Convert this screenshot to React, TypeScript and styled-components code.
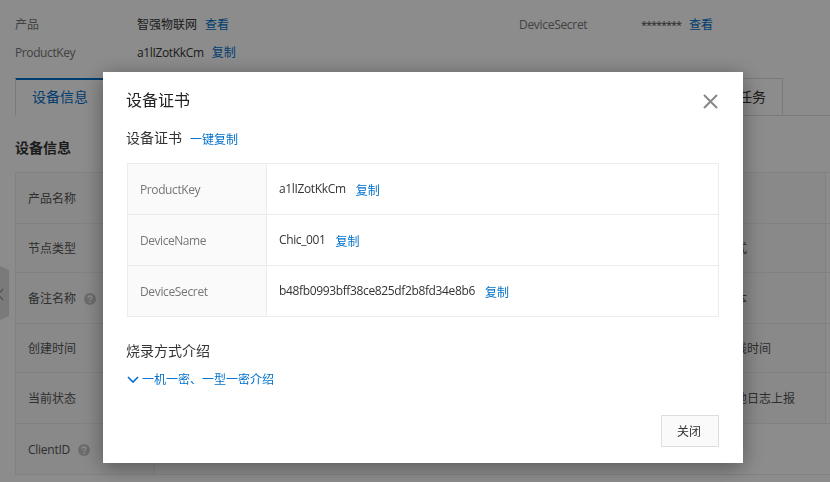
import React from 'react';
import styled, { createGlobalStyle } from 'styled-components';

const GlobalStyle = createGlobalStyle`
  * { box-sizing: border-box; }
  html, body, #root { margin: 0; height: 482px; overflow: hidden; }
  body {
    background: #fff;
    color: #333;
    font: 12px/18px "Open Sans", "Noto Sans CJK SC", sans-serif;
    white-space: nowrap;
  }
`;

const Page = styled.main`
  width: 1010px;
  height: 482px;
  padding: 16px 0 0 15px;
  overflow: hidden;
`;

const Summary = styled.section`
  display: grid;
  grid-template-columns: 122px 382px 122px 1fr;
  grid-auto-rows: 28px;
`;

const Muted = styled.span<{ $track?: number }>`
  color: #777;
  letter-spacing: ${p => p.$track ?? 0}px;
`;

const Value = styled.span<{ $track?: number; $lift?: number }>`
  letter-spacing: ${p => p.$track ?? 0}px;
  margin-top: ${p => -(p.$lift ?? 0)}px;
`;

const Secret = styled(Value)`
  width: 40px;
  font-size: 11px;
  color: #444;
`;

const Inline = styled.div`
  display: flex;
  align-items: flex-start;
  gap: 8px;
`;

const Link = styled.a<{ $drop?: number }>`
  color: #0070cc;
  cursor: pointer;
  margin-top: ${p => p.$drop ?? 0}px;
`;

const Tabs = styled.nav`
  display: flex;
  height: 38px;
  margin-top: 6px;
  font-size: 14px;
  line-height: 36px;
`;

const Tab = styled.div<{ $active?: boolean; $width: number }>`
  width: ${p => p.$width}px;
  padding: 0 16px;
  text-align: right;
  border: 1px solid #dedede;
  border-left-width: ${p => (p.$active ? 1 : 0)}px;
  ${p => p.$active && 'color: #0070cc; text-align: left; border-bottom-color: transparent; box-shadow: inset 0 1px #0070cc; border-top-color: #0070cc;'}
`;

const TabFill = styled.div`
  flex: 1;
  border-bottom: 1px solid #dedede;
`;

const SectionTitle = styled.h2`
  margin: 21px 0 13px;
  font-size: 14px;
  line-height: 22px;
  font-weight: 700;
`;

const InfoTable = styled.div`
  display: grid;
  grid-template-columns: 139px 196px 139px 197px 139px 1fr;
  grid-template-rows: 51px 49px 51px 49px 51px 51px;
  border-top: 1px solid #ebecec;
  border-left: 1px solid #ebecec;
`;

const InfoCell = styled.div<{ $label?: boolean; $span?: number; $track?: number }>`
  display: flex;
  align-items: center;
  gap: 8px;
  padding: 1px 12px 0;
  grid-column: span ${p => p.$span ?? 1};
  border-right: 1px solid #ebecec;
  border-bottom: 1px solid #ebecec;
  color: #555;
  letter-spacing: ${p => p.$track ?? 0}px;
  background: ${p => (p.$label ? '#fafafa' : '#fff')};
`;

const Handle = styled.svg`
  position: absolute;
  left: 0;
  top: 266px;
`;

const Overlay = styled.div`
  position: fixed;
  inset: 0;
  display: flex;
  align-items: flex-start;
  padding: 72px 0 0 103px;
  background: rgba(0, 0, 0, 0.45);
`;

const Dialog = styled.section`
  width: 640px;
  height: 391px;
  padding: 16px 24px 16px;
  display: flex;
  flex-direction: column;
  background: #fff;
  box-shadow: 0 4px 20px rgba(0, 0, 0, 0.4);
`;

const DialogHeader = styled.header`
  display: flex;
  justify-content: space-between;
  height: 39px;
  font-size: 16px;
  line-height: 24px;
  color: #222;
`;

const Title = styled.span`
  margin-left: -1px;
`;

const CloseIcon = styled.svg`
  margin: 5px 0 0;
`;

const Heading = styled.h3`
  margin: 0 0 0 -1px;
  font-size: 14px;
  line-height: 22px;
  font-weight: 400;
`;

const CertTable = styled.div`
  display: grid;
  grid-template-columns: 139px 1fr;
  grid-auto-rows: 51px;
  margin-top: 14px;
  width: 592px;
  border-top: 1px solid #ebecec;
  border-left: 1px solid #ebecec;
`;

const CertCell = styled.div<{ $label?: boolean }>`
  display: flex;
  align-items: flex-start;
  gap: 10px;
  padding: 17px 12px 0;
  border-right: 1px solid #ebecec;
  border-bottom: 1px solid #ebecec;
  background: ${p => (p.$label ? '#fafafa' : '#fff')};
`;

const Guide = styled.div`
  margin-top: 23px;
  height: 75px;
`;

const GuideToggle = styled.a`
  display: flex;
  align-items: center;
  gap: 3px;
  margin-top: 9px;
  color: #0070cc;
`;

const CloseButton = styled.button`
  align-self: flex-end;
  width: 58px;
  height: 32px;
  margin-top: auto;
  padding: 2px 2px 0 0;
  border: 1px solid #dedede;
  background: #fafafa;
  color: #333;
  font: inherit;
`;

const Help = () => (
  <svg width="12" height="12" viewBox="0 0 12 12">
    <circle cx="6" cy="6" r="6" fill="#c4c4c4" />
    <path d="M4.1 4.7c0-2.4 3.8-2.3 3.8-.1C7.9 6 6 6 6 7.2M6 8.3v1.4" fill="none" stroke="#fff" strokeWidth="1.4" />
  </svg>
);

const infoRows = [
  { label: '产品名称', right: '地域' },
  { label: '节点类型', right: '认证方式' },
  { label: '备注名称', right: '固件版本', help: true },
  { label: '创建时间', right: '最后上线时间' },
  { label: '当前状态', right: '设备本地日志上报' },
];

const certificate = [
  { name: 'ProductKey', value: 'a1lIZotKkCm', nameTrack: -0.4, track: -0.36 },
  { name: 'DeviceName', value: 'Chic_001', nameTrack: -0.45, track: -0.38 },
  { name: 'DeviceSecret', value: 'b48fb0993bff38ce825df2b8fd34e8b6', nameTrack: -0.35, track: -0.36 },
];

export default function App() {
  return (
    <>
      <GlobalStyle />
      <Page>
        <Summary>
          <Muted>产品</Muted>
          <Inline><Value>智强物联网</Value><Link>查看</Link></Inline>
          <Muted $track={-0.3}>DeviceSecret</Muted>
          <Inline><Secret $track={-1.05}>********</Secret><Link>查看</Link></Inline>
          <Muted $track={-0.4}>ProductKey</Muted>
          <Inline><Value $track={-0.36}>a1lIZotKkCm</Value><Link>复制</Link></Inline>
        </Summary>
        <Tabs>
          <Tab $active $width={90}>设备信息</Tab>
          <Tab $width={678}>任务</Tab>
          <TabFill />
        </Tabs>
        <SectionTitle>设备信息</SectionTitle>
        <InfoTable>
          {infoRows.map(row => (
            <React.Fragment key={row.label}>
              <InfoCell $label>{row.label}{row.help && <Help />}</InfoCell>
              <InfoCell />
              <InfoCell $label />
              <InfoCell />
              <InfoCell $label>{row.right}</InfoCell>
              <InfoCell />
            </React.Fragment>
          ))}
          <InfoCell $label $track={-0.25}>ClientID<Help /></InfoCell>
          <InfoCell $span={5} />
        </InfoTable>
      </Page>
      <Handle width="9" height="54" viewBox="0 0 9 54">
        <path d="M0 0 9 4v46l-9 4z" fill="#dedede" />
        <path d="M3 23-2 28.5 3 34" fill="none" stroke="#999" strokeWidth="1.3" />
      </Handle>
      <Overlay>
        <Dialog>
          <DialogHeader>
            <Title>设备证书</Title>
            <CloseIcon width="17" height="17" viewBox="0 0 17 17">
              <path d="m2 2 13 13M15 2 2 15" stroke="#888" strokeWidth="2" />
            </CloseIcon>
          </DialogHeader>
          <Inline>
            <Heading>设备证书</Heading>
            <Link $drop={4}>一键复制</Link>
          </Inline>
          <CertTable>
            {certificate.map(item => (
              <React.Fragment key={item.name}>
                <CertCell $label><Muted $track={item.nameTrack}>{item.name}</Muted></CertCell>
                <CertCell>
                  <Value $track={item.track} $lift={1}>{item.value}</Value>
                  <Link $drop={1}>复制</Link>
                </CertCell>
              </React.Fragment>
            ))}
          </CertTable>
          <Guide>
            <Heading>烧录方式介绍</Heading>
            <GuideToggle>
              <svg width="12" height="8" viewBox="0 0 12 8">
                <path d="m1 1 5 5 5-5" fill="none" stroke="#0070cc" strokeWidth="1.6" />
              </svg>
              一机一密、一型一密介绍
            </GuideToggle>
          </Guide>
          <CloseButton>关闭</CloseButton>
        </Dialog>
      </Overlay>
    </>
  );
}
